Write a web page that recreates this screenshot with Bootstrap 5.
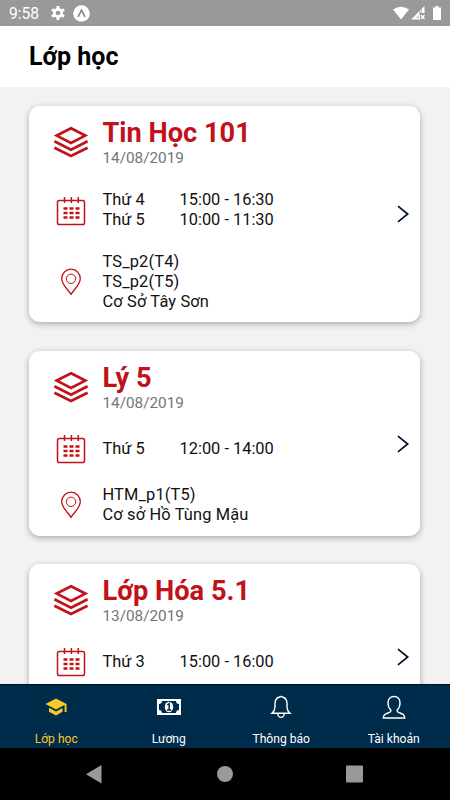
<!DOCTYPE html>
<html lang="vi">
<head>
<meta charset="utf-8">
<meta name="viewport" content="width=device-width, initial-scale=1">
<title>Lớp học</title>
<link href="https://cdn.jsdelivr.net/npm/bootstrap@5.3.0/dist/css/bootstrap.min.css" rel="stylesheet">
<style>
body{font-family:Roboto,"Liberation Sans",sans-serif;background:#f2f2f2;color:#111;height:800px;width:450px}
svg{display:block;flex:none}
.status{height:26px;background:#999;color:#fff;font-size:15.6px;line-height:26px;padding-left:9px;padding-right:9px}
.status .clock{width:42px;padding-top:2px}
.status .signal{margin-left:2px}
.appbar{height:61px;padding-left:29px;padding-top:1px}
.appbar h1{font-size:25px;font-weight:700;color:#000}
.feed{padding:19px 30px 0 29px;gap:29px;min-height:0}
.class-card{border:0;border-radius:11px;box-shadow:0 2px 6px rgba(0,0,0,.3);padding:11px 10px 11px 22px;height:216px;flex:none}
.class-card.short{height:185px}
.class-card:last-child{margin-top:-1px}
.ico{width:40px;margin-right:11.5px}
.title{font-size:27.2px;line-height:32px;font-weight:700;color:#c1121a}
.date{font-size:15.3px;line-height:18px;color:#757575}
.lines{font-size:16.4px;line-height:20px}
.place .lines{letter-spacing:.15px}
.day{width:77px}
.sched{margin-top:23px;min-height:30px}
.sched svg{margin-top:2px}
.short .sched{margin-top:22px}
.short .sched svg{margin-top:0}
.place{margin-top:22px}
.short .place{margin-top:21px}
.red{color:#c1121a}
.tabs{height:64px;background:#002c4b;border-top:1px solid #001127;flex:none}
.tab{font-size:12.1px;line-height:16px;color:#fff;padding-top:10px}
.tab svg{margin-bottom:12px}
.tab.active{color:#f9c926}
.sysbar{height:52px;background:#000;flex:none}
</style>
<script src="https://cdn.jsdelivr.net/npm/bootstrap@5.3.0/dist/js/bootstrap.bundle.min.js"></script>
</head>
<body class="d-flex flex-column overflow-hidden m-0">
<svg width="0" height="0" class="position-absolute">
 <symbol id="layers" viewBox="0 0 36 32"><g fill="none" stroke="currentColor" stroke-width="2.700"><path d="M18 2.200 32.300 9.600 18 17 3.700 9.600Z"/><path d="M1.400 15.200 18 23.700l16.600-8.500"/><path d="M1.400 21.700 18 30l16.600-8.300"/></g></symbol>
 <symbol id="cal" viewBox="0 0 30 30"><rect x="1.500" y="4.500" width="27" height="24" rx="1.800" fill="none" stroke="currentColor" stroke-width="1.500"/><path d="M8.500 1v6M15.400 1v6M22.300 1v6" stroke="currentColor" stroke-width="1.500"/><path d="M7.500 12.500h4M13.500 12.500h4M19.500 12.500h4M7.500 17h4M13.500 17h4M19.500 17h4M7.500 21.500h4M13.500 21.500h4M19.500 21.500h4" stroke="currentColor" stroke-width="2.600"/></symbol>
 <symbol id="pin" viewBox="0 0 20 28"><path d="M10 26.300C7.500 22 .7 16.800.7 10.500a9.300 9.300 0 0 1 18.600 0C19.300 16.800 12.500 22 10 26.300Z" fill="none" stroke="currentColor" stroke-width="1.300"/><circle cx="10" cy="10.800" r="4.700" fill="none" stroke="currentColor" stroke-width="1"/></symbol>
 <symbol id="chev" viewBox="0 0 14 18"><path d="m2 1.200 9.700 7.800L2 16.800" fill="none" stroke="#00112b" stroke-width="1.700"/></symbol>
</svg>

<div class="status d-flex align-items-center flex-shrink-0">
 <span class="clock">9:58</span>
 <svg width="14" height="14" viewBox="0 0 14 14"><g stroke="#fff" stroke-width="3"><path d="M7 0v14M.9 3.500l12.200 7M13.100 3.500.9 10.500"/></g><circle cx="7" cy="7" r="5" fill="#fff"/><circle cx="7" cy="7" r="2.300" fill="#999"/></svg>
 <svg width="17" height="17" viewBox="0 0 17 17" class="ms-2"><circle cx="8.500" cy="8.500" r="8.300" fill="#fff"/><path d="M5 11.800 8.500 5.200l3.500 6.600" fill="none" stroke="#888" stroke-width="1.700"/></svg>
 <svg width="16" height="14" viewBox="0 0 16 14" class="ms-auto"><path d="M0 3.500Q8-2.200 16 3.500L8 13.500Z" fill="#fff"/></svg>
 <svg width="14" height="14" viewBox="0 0 14 14" class="signal me-2"><path d="M13.500 0v7H9v6.500H0Z" fill="#fff"/><path d="M8 6.500 11 3v4.500L4 12h4Z" fill="#999" opacity=".55"/><path d="m10 9 3.500 4M13.500 9 10 13" stroke="#fff" stroke-width="1.300"/></svg>
 <svg width="8" height="14" viewBox="0 0 8 14"><path d="M2.500 0h3v1.500H8V14H0V1.500h2.500Z" fill="#fff"/></svg>
</div>

<header class="appbar bg-white d-flex align-items-center flex-shrink-0"><h1 class="m-0">Lớp học</h1></header>

<main class="feed d-flex flex-column flex-grow-1 overflow-hidden">
 <article class="class-card card flex-row align-items-center">
  <div class="flex-grow-1 align-self-start">
   <div class="d-flex align-items-center"><div class="ico red d-flex justify-content-center"><svg width="36" height="32"><use href="#layers"/></svg></div><div><div class="title">Tin Học 101</div><div class="date">14/08/2019</div></div></div>
   <div class="sched d-flex align-items-center"><div class="ico red d-flex justify-content-center"><svg width="30" height="30"><use href="#cal"/></svg></div><div class="lines"><div class="d-flex"><div class="day">Thứ 4</div><div>15:00 - 16:30</div></div><div class="d-flex"><div class="day">Thứ 5</div><div>10:00 - 11:30</div></div></div></div>
   <div class="place d-flex align-items-center"><div class="ico red d-flex justify-content-center"><svg width="20" height="28"><use href="#pin"/></svg></div><div class="lines">TS_p2(T4)<br>TS_p2(T5)<br>Cơ Sở Tây Sơn</div></div>
  </div>
  <svg width="14" height="18"><use href="#chev"/></svg>
 </article>
 <article class="class-card short card flex-row align-items-center">
  <div class="flex-grow-1 align-self-start">
   <div class="d-flex align-items-center"><div class="ico red d-flex justify-content-center"><svg width="36" height="32"><use href="#layers"/></svg></div><div><div class="title">Lý 5</div><div class="date">14/08/2019</div></div></div>
   <div class="sched d-flex align-items-center"><div class="ico red d-flex justify-content-center"><svg width="30" height="30"><use href="#cal"/></svg></div><div class="lines d-flex"><div class="day">Thứ 5</div><div>12:00 - 14:00</div></div></div>
   <div class="place d-flex align-items-center"><div class="ico red d-flex justify-content-center"><svg width="20" height="28"><use href="#pin"/></svg></div><div class="lines">HTM_p1(T5)<br>Cơ sở Hồ Tùng Mậu</div></div>
  </div>
  <svg width="14" height="18"><use href="#chev"/></svg>
 </article>
 <article class="class-card short card flex-row align-items-center">
  <div class="flex-grow-1 align-self-start">
   <div class="d-flex align-items-center"><div class="ico red d-flex justify-content-center"><svg width="36" height="32"><use href="#layers"/></svg></div><div><div class="title">Lớp Hóa 5.1</div><div class="date">13/08/2019</div></div></div>
   <div class="sched d-flex align-items-center"><div class="ico red d-flex justify-content-center"><svg width="30" height="30"><use href="#cal"/></svg></div><div class="lines d-flex"><div class="day">Thứ 3</div><div>15:00 - 16:00</div></div></div>
  </div>
  <svg width="14" height="18"><use href="#chev"/></svg>
 </article>
</main>

<nav class="tabs row g-0 text-center">
 <div class="tab active col d-flex flex-column align-items-center"><svg width="24" height="24" viewBox="0 0 24 24"><g fill="currentColor"><path d="M12 3.500 22.500 9v8h-1.900V10.100L12 14.500 1.500 9Z"/><path d="M5 12.700l7 3.900 6.500-3.600v3.800L12 20.500l-7-3.700Z"/></g></svg>Lớp học</div>
 <div class="tab col d-flex flex-column align-items-center"><svg width="26" height="24" viewBox="0 0 26 24"><rect x="1" y="4" width="24" height="16" fill="#fff"/><path d="M6 6h14c0 2 1.300 2.800 3 3v6c-1.700.2-3 1-3 3H6c0-2-1.300-2.800-3-3V9c1.700-.2 3-1 3-3Z" fill="#002c4b"/><ellipse cx="13" cy="12" rx="4.200" ry="5.300" fill="#fff"/><path d="m11.300 10 1.900-1.300V15M11 15h4.300" fill="none" stroke="#002c4b" stroke-width="1.500"/></svg>Lương</div>
 <div class="tab col d-flex flex-column align-items-center"><svg width="22" height="24" viewBox="0 0 22 24"><g fill="none" stroke="#fff" stroke-width="1.400"><path d="M9 2.300Q11 .5 13 2.300C16 3 17 5.500 17 9v3c0 3 1 4.500 3 6.300H2C4 16.500 5 15 5 12V9c0-3.500 1-6 4-6.700Z"/><path d="M7.800 18.500a3.200 3.900 0 0 0 6.400 0"/></g></svg>Thông báo</div>
 <div class="tab col d-flex flex-column align-items-center"><svg width="24" height="24" viewBox="0 0 24 24"><path d="M12 1.500c-3.700 0-6 2.700-6 6.500 0 3 1.200 5.600 2.800 7 .3 1.600-.5 2.200-2 2.700C3.500 18.800 1.300 19.500 1.300 23h21.400c0-3.500-2.200-4.200-5.500-5.300-1.500-.5-2.300-1.100-2-2.700C16.800 13.600 18 11 18 8c0-3.800-2.300-6.500-6-6.500Z" fill="none" stroke="#fff" stroke-width="1.400"/></svg>Tài khoản</div>
</nav>
<div class="sysbar d-flex justify-content-center align-items-center">
 <svg width="450" height="52" viewBox="0 0 450 52" fill="#999"><path d="M101.500 17v18.500L86 26.200Z"/><circle cx="225" cy="26" r="8"/><rect x="346" y="17.500" width="17" height="17" rx="1"/></svg>
</div>
</body>
</html>
